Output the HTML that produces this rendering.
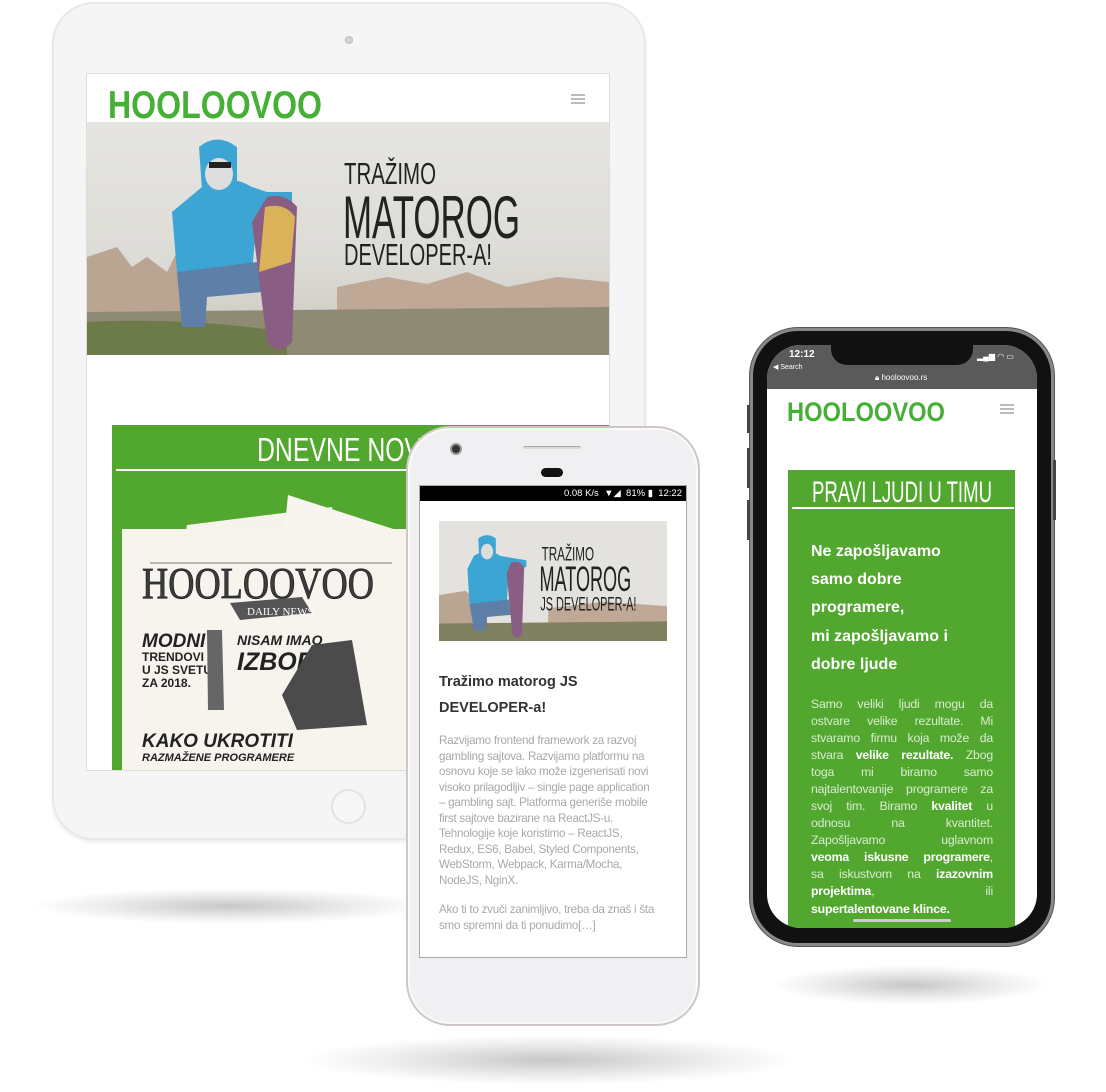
<!DOCTYPE html>
<html><head><meta charset="utf-8">
<style>
*{margin:0;padding:0;box-sizing:border-box}
body{width:1106px;height:1092px;background:#fff;position:relative;overflow:hidden;font-family:"Liberation Sans",sans-serif}
.a{position:absolute}
.shadow{position:absolute;border-radius:50%;background:radial-gradient(ellipse at center,rgba(0,0,0,.22) 0%,rgba(0,0,0,.07) 45%,rgba(0,0,0,0) 70%)}
.logo{font-weight:bold;color:#45b035;white-space:nowrap;transform-origin:left top;letter-spacing:-0.5px}
.ham{position:absolute;width:14px;height:2px;background:#bbb;box-shadow:0 4px 0 #bbb,0 8px 0 #bbb}
.bl{position:absolute;left:439px;font-size:11.6px;color:#a8a8a8;white-space:nowrap;letter-spacing:-0.25px}
.jl{position:absolute;left:811px;width:182px;font-size:12.3px;color:#d9ecd0;text-align:justify;text-align-last:justify;white-space:nowrap;letter-spacing:-0.2px}
.jl b{color:#fff}
</style></head><body>

<!-- shadows -->
<div class="shadow" style="left:30px;top:888px;width:400px;height:36px"></div>
<div class="shadow" style="left:300px;top:1035px;width:500px;height:50px"></div>
<div class="shadow" style="left:770px;top:965px;width:280px;height:40px"></div>

<!-- TABLET -->
<div class="a" style="left:52px;top:2px;width:594px;height:838px;border-radius:42px;background:#f5f5f5;border:2px solid #e8e8e8;box-shadow:0 2px 3px rgba(0,0,0,.08)"></div>
<div class="a" style="left:345px;top:36px;width:8px;height:8px;border-radius:50%;background:#d4d4d4;border:1px solid #bbb"></div>
<div class="a" style="left:331px;top:789px;width:35px;height:35px;border-radius:50%;border:2px solid #e2e2e2;background:#f6f6f6"></div>
<div class="a" style="left:86px;top:73px;width:524px;height:698px;background:#fff;border:1px solid #ddd;overflow:hidden">
  <svg class="a" style="left:21px;top:14px" width="220" height="34"><text x="0" y="30" font-family="Liberation Sans" font-weight="bold" font-size="39" fill="#45b035" textLength="214" lengthAdjust="spacingAndGlyphs">HOOLOOVOO</text></svg>
  <div class="ham" style="left:484px;top:20px"></div>
  <svg class="a" style="left:0;top:48px" width="522" height="233" viewBox="0 0 522 233">
    <defs><linearGradient id="w" x1="0" y1="0" x2="0" y2="1"><stop offset="0" stop-color="#e6e5e1"/><stop offset=".6" stop-color="#dcdbd6"/><stop offset="1" stop-color="#c9c6bd"/></linearGradient></defs>
    <rect width="522" height="233" fill="url(#w)"/>
    <path d="M0 135 L30 125 L45 145 L60 135 L80 150 L90 130 L110 145 L110 200 L0 200Z" fill="#b9a591"/>
    <path d="M250 165 L300 155 L340 162 L380 150 L420 165 L470 155 L522 160 L522 205 L250 205Z" fill="#bfa996"/>
    <path d="M0 190 L522 185 L522 233 L0 233Z" fill="#8e8a74"/>
    <path d="M0 200 Q100 195 200 210 L200 233 L0 233Z" fill="#6d7a4a"/>
    <path d="M115 65 Q140 50 165 65 L180 70 L205 70 L205 80 L170 95 L165 150 L90 150 L85 90Z" fill="#3da5d4"/>
    <path d="M112 25 Q130 10 150 25 L150 68 L115 68Z" fill="#3da5d4"/>
    <ellipse cx="132" cy="52" rx="14" ry="16" fill="#ddd"/>
    <rect x="122" y="40" width="22" height="6" fill="#222"/>
    <path d="M90 150 L170 140 L175 170 L120 175 L118 205 L95 205Z" fill="#5d7fa8"/>
    <path d="M180 75 Q198 70 210 85 L205 220 Q192 235 180 220 L165 100Z" fill="#8a5d82"/>
    <path d="M178 85 Q198 80 208 95 L204 140 L172 150Z" fill="#d9b25a"/>
  </svg>
  <svg class="a" style="left:255px;top:80px" width="200" height="120">
    <text x="2" y="30" font-family="Liberation Sans Narrow,Liberation Sans" font-size="31" fill="#222" textLength="92" lengthAdjust="spacingAndGlyphs">TRAŽIMO</text>
    <text x="1" y="84" font-family="Liberation Sans Narrow,Liberation Sans" font-size="60" fill="#222" textLength="177" lengthAdjust="spacingAndGlyphs">MATOROG</text>
    <text x="2" y="111" font-family="Liberation Sans Narrow,Liberation Sans" font-size="31" fill="#222" textLength="148" lengthAdjust="spacingAndGlyphs">DEVELOPER-A!</text>
  </svg>
  <div class="a" style="left:25px;top:351px;width:500px;height:350px;background:#52a82f">
    <svg class="a" style="left:0;top:0" width="500" height="44"><text x="145" y="36" font-family="Liberation Sans Narrow,Liberation Sans" font-size="33" fill="#fff" textLength="222" lengthAdjust="spacingAndGlyphs">DNEVNE NOVOSTI</text></svg>
    <div class="a" style="left:4px;top:44px;width:496px;height:2px;background:#fff"></div>
    <svg class="a" style="left:0;top:70px" width="500" height="280">
      <path d="M75 30 L220 12 L230 60 L70 60Z" fill="#f5f3ec"/>
      <path d="M176 0 L300 40 L170 60Z" fill="#f7f5ee"/>
      <rect x="10" y="34" width="300" height="250" fill="#f6f4ec"/>
      <line x1="38" y1="68" x2="280" y2="68" stroke="#777"/>
      <text x="30" y="103" font-family="Liberation Serif" font-size="44" fill="#3c3c3c" stroke="#222" stroke-width=".8" textLength="232" lengthAdjust="spacingAndGlyphs">HOOLOOVOO</text>
      <path d="M118 108 L190 102 L200 118 L128 125Z" fill="#555"/>
      <text x="135" y="120" font-family="Liberation Serif" font-size="11" fill="#fff">DAILY NEWS</text>
      <text x="30" y="152" font-weight="bold" font-size="19" fill="#222" font-style="italic">MODNI</text>
      <text x="30" y="166" font-weight="bold" font-size="12" fill="#222">TRENDOVI</text>
      <text x="30" y="179" font-weight="bold" font-size="12" fill="#222">U JS SVETU</text>
      <text x="30" y="192" font-weight="bold" font-size="12" fill="#222">ZA 2018.</text>
      <text x="125" y="150" font-weight="bold" font-size="14" fill="#222" font-style="italic">NISAM IMAO</text>
      <text x="125" y="175" font-weight="bold" font-size="25" fill="#222" font-style="italic">IZBORA</text>
      <text x="30" y="252" font-weight="bold" font-size="19" fill="#222" font-style="italic">KAKO UKROTITI</text>
      <text x="30" y="266" font-weight="bold" font-size="11" fill="#222" font-style="italic">RAZMAŽENE PROGRAMERE</text>
      <path d="M95 135 L110 135 L112 215 L96 215Z" fill="#666"/>
      <path d="M200 150 L240 145 L255 230 L185 235 L170 200Z" fill="#4b4b4b"/>
    </svg>
  </div>
</div>

<!-- ANDROID -->
<div class="a" style="left:406px;top:426px;width:294px;height:600px;border-radius:44px;background:#f0f0f3;border:2px solid #cfc6c6;box-shadow:inset 0 0 0 2px #fafafa"></div>
<div class="a" style="left:450px;top:443px;width:12px;height:12px;border-radius:50%;background:#333;border:2px solid #999"></div>
<div class="a" style="left:523px;top:446px;width:58px;height:3px;border-radius:2px;background:#d8d8d8;border-top:1px solid #aaa"></div>
<div class="a" style="left:541px;top:468px;width:22px;height:9px;border-radius:5px;background:#111"></div>
<div class="a" style="left:419px;top:485px;width:268px;height:473px;background:#fff;border:1px solid #aaa;overflow:hidden">
  <div class="a" style="left:0;top:0;width:268px;height:15px;background:#000;color:#fff;font-size:9.5px;text-align:right;padding-right:6px;line-height:15px;white-space:nowrap">0.08 K/s &nbsp;▼◢ &nbsp;81% ▮ &nbsp;12:22</div>
  <svg class="a" style="left:19px;top:35px" width="228" height="120" viewBox="0 0 522 275" preserveAspectRatio="none">
    <rect width="522" height="275" fill="#e3e2de"/>
    <path d="M0 170 L60 160 L90 180 L110 170 L110 240 L0 240Z" fill="#b9a591"/>
    <path d="M250 200 L380 185 L522 195 L522 245 L250 245Z" fill="#bfa996"/>
    <path d="M0 235 L522 230 L522 275 L0 275Z" fill="#7f8160"/>
    <path d="M80 80 Q110 60 140 80 L200 90 L200 105 L160 115 L155 190 L70 190 L65 110Z" fill="#3da5d4"/>
    <path d="M90 40 Q110 25 130 40 L130 85 L92 85Z" fill="#3da5d4"/>
    <ellipse cx="110" cy="70" rx="14" ry="18" fill="#ddd"/>
    <path d="M70 190 L160 180 L165 215 L110 220 L108 250 L80 250Z" fill="#5d7fa8"/>
    <path d="M165 95 Q185 90 195 105 L190 260 Q178 275 168 260 L155 120Z" fill="#8a5d82"/>
    <text x="235" y="90" font-family="Liberation Sans Narrow,Liberation Sans" font-size="44" fill="#222" textLength="120" lengthAdjust="spacingAndGlyphs">TRAŽIMO</text>
    <text x="230" y="160" font-family="Liberation Sans Narrow,Liberation Sans" font-size="80" fill="#222" textLength="210" lengthAdjust="spacingAndGlyphs">MATOROG</text>
    <text x="232" y="205" font-family="Liberation Sans Narrow,Liberation Sans" font-size="44" fill="#222" textLength="220" lengthAdjust="spacingAndGlyphs">JS DEVELOPER-A!</text>
  </svg>
</div>
<div class="a" style="left:439px;top:669px;font-size:14.5px;font-weight:bold;color:#333;line-height:26px;white-space:nowrap">Tražimo matorog JS<br>DEVELOPER-a!</div>
<div class="bl" style="top:734px">Razvijamo frontend framework za razvoj</div>
<div class="bl" style="top:749.5px">gambling sajtova. Razvijamo platformu na</div>
<div class="bl" style="top:765px">osnovu koje se lako može izgenerisati novi</div>
<div class="bl" style="top:780.5px">visoko prilagodljiv – single page application</div>
<div class="bl" style="top:796px">– gambling sajt. Platforma generiše mobile</div>
<div class="bl" style="top:811.5px">first sajtove bazirane na ReactJS-u.</div>
<div class="bl" style="top:827px">Tehnologije koje koristimo – ReactJS,</div>
<div class="bl" style="top:842.5px">Redux, ES6, Babel, Styled Components,</div>
<div class="bl" style="top:858px">WebStorm, Webpack, Karma/Mocha,</div>
<div class="bl" style="top:873.5px">NodeJS, NginX.</div>
<div class="bl" style="top:903px">Ako ti to zvuči zanimljivo, treba da znaš i šta</div>
<div class="bl" style="top:918.5px">smo spremni da ti ponudimo[…]</div>

<!-- IPHONE -->
<div class="a" style="left:750px;top:328px;width:304px;height:618px;border-radius:48px;background:#111;border:3px solid #888;box-shadow:0 0 0 1px #555"></div>
<div class="a" style="left:747px;top:405px;width:3px;height:28px;background:#444"></div>
<div class="a" style="left:747px;top:448px;width:3px;height:40px;background:#444"></div>
<div class="a" style="left:747px;top:500px;width:3px;height:40px;background:#444"></div>
<div class="a" style="left:1053px;top:460px;width:3px;height:60px;background:#444"></div>
<div class="a" style="left:767px;top:345px;width:270px;height:583px;border-radius:34px;background:#fff;overflow:hidden">
  <div class="a" style="left:0;top:0;width:270px;height:44px;background:#5a5a5a"></div>
  <div class="a" style="left:64px;top:-2px;width:142px;height:22px;border-radius:0 0 16px 16px;background:#111"></div>
  <div class="a" style="left:22px;top:4px;color:#fff;font-size:10px;font-weight:bold">12:12</div>
  <div class="a" style="left:6px;top:18px;color:#fff;font-size:7px">◀ Search</div>
  <div class="a" style="left:210px;top:7px;color:#fff;font-size:8px;white-space:nowrap">▂▄▆ ◠ ▭</div>
  <div class="a" style="left:108px;top:28px;color:#fff;font-size:8px">🔒︎ hooloovoo.rs</div>
  <svg class="a" style="left:20px;top:55px" width="165" height="26"><text x="0" y="21" font-family="Liberation Sans" font-weight="bold" font-size="27" fill="#45b035" textLength="158" lengthAdjust="spacingAndGlyphs">HOOLOOVOO</text></svg>
  <div class="ham" style="left:233px;top:59px"></div>
  <div class="a" style="left:21px;top:125px;width:227px;height:470px;background:#52a82f">
    <svg class="a" style="left:0;top:0" width="227" height="38"><text x="24" y="32" font-family="Liberation Sans Narrow,Liberation Sans" font-size="30" fill="#fff" textLength="180" lengthAdjust="spacingAndGlyphs">PRAVI LJUDI U TIMU</text></svg>
    <div class="a" style="left:4px;top:37px;width:222px;height:2px;background:#fff"></div>
    <div class="a" style="left:23px;top:68px;color:#fff;font-weight:bold;font-size:16px;line-height:28.2px;white-space:nowrap">Ne zapošljavamo<br>samo dobre<br>programere,<br>mi zapošljavamo i<br>dobre ljude</div>
  </div>
  <div class="a" style="left:86px;top:574px;width:98px;height:3px;border-radius:2px;background:#ccc"></div>
</div>
<div class="jl" style="top:697px">Samo veliki ljudi mogu da</div>
<div class="jl" style="top:714px">ostvare velike rezultate. Mi</div>
<div class="jl" style="top:731px">stvaramo firmu koja može da</div>
<div class="jl" style="top:748px">stvara <b>velike rezultate.</b> Zbog</div>
<div class="jl" style="top:765px">toga mi biramo samo</div>
<div class="jl" style="top:782px">najtalentovanije programere za</div>
<div class="jl" style="top:799px">svoj tim. Biramo <b>kvalitet</b> u</div>
<div class="jl" style="top:816px">odnosu na kvantitet.</div>
<div class="jl" style="top:833px">Zapošljavamo uglavnom</div>
<div class="jl" style="top:850px"><b>veoma iskusne programere</b>,</div>
<div class="jl" style="top:867px">sa iskustvom na <b>izazovnim</b></div>
<div class="jl" style="top:884px"><b>projektima</b>, ili</div>
<div class="jl" style="top:902px;text-align-last:left"><b>supertalentovane klince.</b></div>
<div class="a" style="left:853px;top:919px;width:98px;height:3px;border-radius:2px;background:#ccc"></div>
</body></html>
